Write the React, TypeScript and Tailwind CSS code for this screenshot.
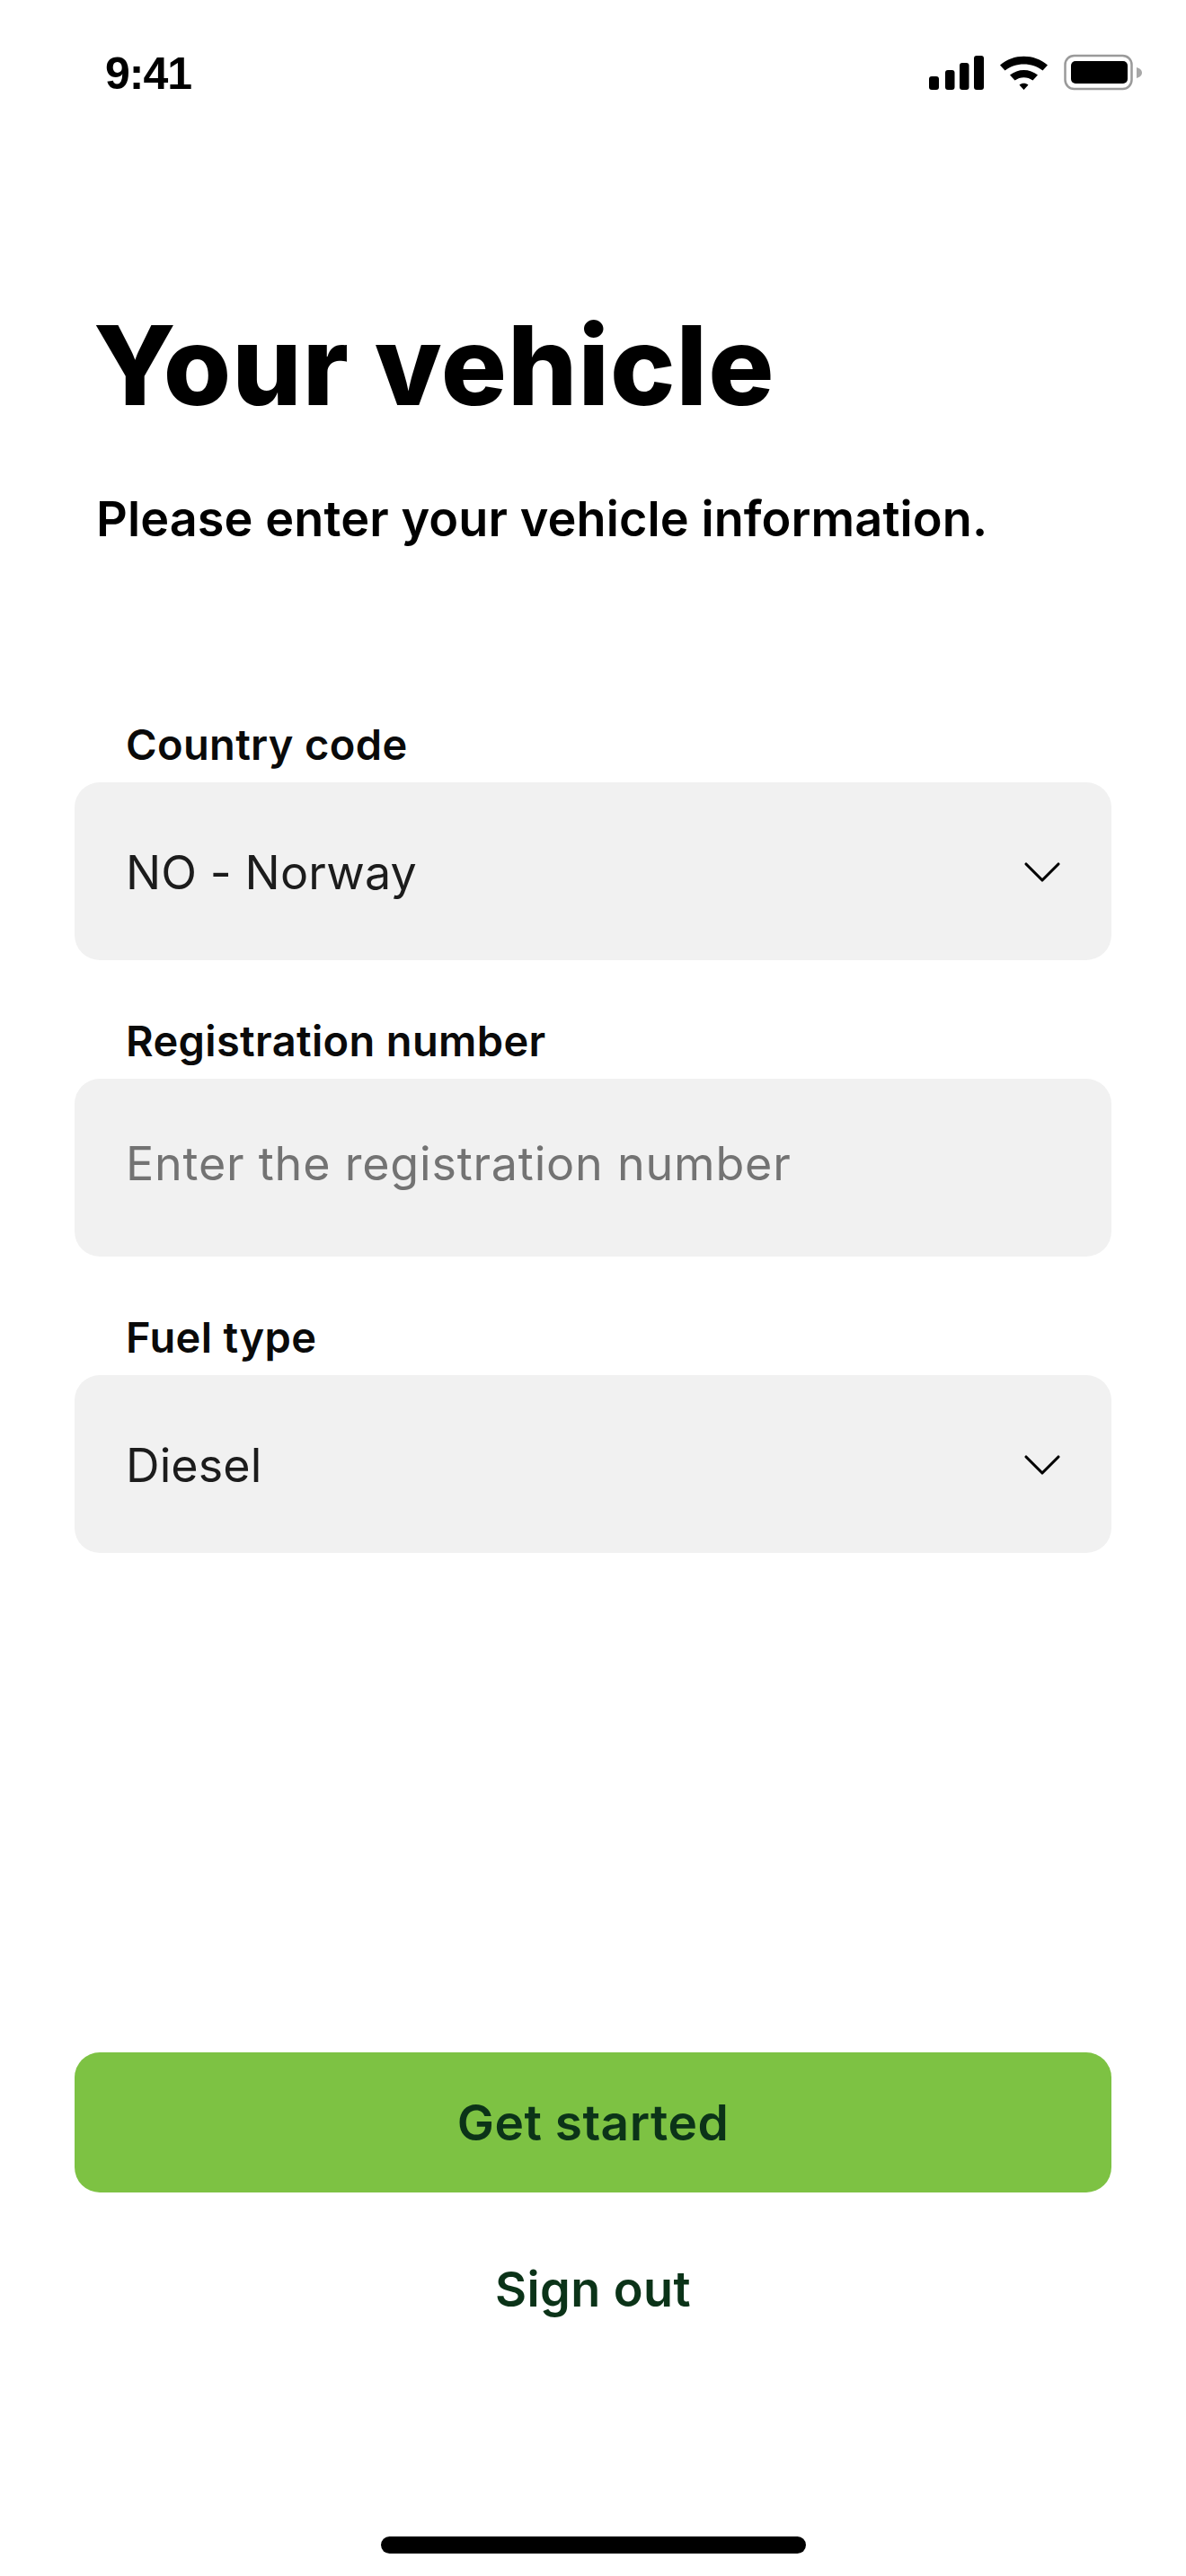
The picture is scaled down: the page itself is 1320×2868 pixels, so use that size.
import { ChevronDown } from 'lucide-react';

const StatusIcons = () => (
  <svg width="240" height="44" viewBox="0 0 240 44" className="block">
    <rect x="0" y="25" width="11" height="15" rx="3" fill="#000" />
    <rect x="18" y="18" width="10.5" height="22" rx="3" fill="#000" />
    <rect x="34" y="10" width="10.5" height="30" rx="3" fill="#000" />
    <rect x="50" y="2" width="11" height="38" rx="3" fill="#000" />
    <path
      d="M79 12.5C94 -0.5 117 -0.5 132 12.5L126.5 18.5C115 9 96 9 84.5 18.5Z M90 23.5C99 16 112 16 121 23.5L115.5 29.5C109.5 25 101.5 25 95.5 29.5Z M100.5 34.5C103.5 32 107.5 32 110.5 34.5L105.5 40Z"
      fill="#000"
    />
    <rect x="151.5" y="2" width="74" height="37" rx="10" fill="none" stroke="#9a9a9a" strokeWidth="2.5" />
    <rect x="158" y="8" width="63" height="25" rx="5" fill="#000" />
    <path d="M231 15C234.5 16 237 18 237 21C237 24 234.5 26 231 27Z" fill="#a8a8a8" />
  </svg>
);

const Field = ({ label, value, placeholder, select }: { label: string; value?: string; placeholder?: string; select?: boolean }) => (
  <div>
    <div className="pl-[57px] text-[47px] leading-[56px] font-semibold text-[#0a0a0a] tracking-[0.35px]">{label}</div>
    <div className="mt-[14px] h-[198px] rounded-[28px] bg-[#f1f1f1] pl-[57px] pr-[41px] flex items-center justify-between">
      <span className={`text-[52px] leading-[60px] ${placeholder ? 'text-[#737373] tracking-[0.8px] -mt-[8px]' : 'text-[#1c1c1c] tracking-[0.1px] mt-[3px]'}`}>
        {value || placeholder}
      </span>
      {select && <ChevronDown size={72} strokeWidth={1.05} className="text-black mt-[2px]" />}
    </div>
  </div>
);

export default function App() {
  return (
    <div className="w-[1320px] h-[2868px] bg-white flex flex-col font-['Inter',sans-serif]">
      <div className="h-[60px]" />
      <div className="flex items-center justify-between pl-[117px] pr-[46px] h-[44px]">
        <span className="font-['Liberation_Sans',sans-serif] text-[50px] font-bold leading-[44px] tracking-[-1px]">9:41</span>
        <StatusIcons />
      </div>

      <div className="px-[107px] mt-[233px]">
        <h1 className="-ml-[3px] text-[122px] leading-[140px] font-extrabold text-black tracking-[1px]">Your vehicle</h1>
        <p className="mt-[69px] text-[54px] leading-[64px] font-semibold text-black tracking-[0.1px]">Please enter your vehicle information.</p>
      </div>

      <div className="mx-[83px] mt-[191px] flex flex-col gap-[62px]">
        <Field label="Country code" value="NO - Norway" select />
        <Field label="Registration number" placeholder="Enter the registration number" />
        <Field label="Fuel type" value="Diesel" select />
      </div>

      <div className="mx-[83px] mt-auto">
        <button type="button" className="w-full h-[156px] rounded-[28px] bg-[#7dc243] text-[#0b3318] text-[55px] font-semibold tracking-[0.5px]">
          Get started
        </button>
        <button type="button" className="w-full mt-[76px] h-[64px] text-[#0b3318] text-[54px] leading-[64px] font-semibold tracking-[0.4px]">
          Sign out
        </button>
      </div>

      <div className="mt-[243px] mb-[25px] mx-auto w-[473px] h-[19px] rounded-full bg-black" />
    </div>
  );
}
